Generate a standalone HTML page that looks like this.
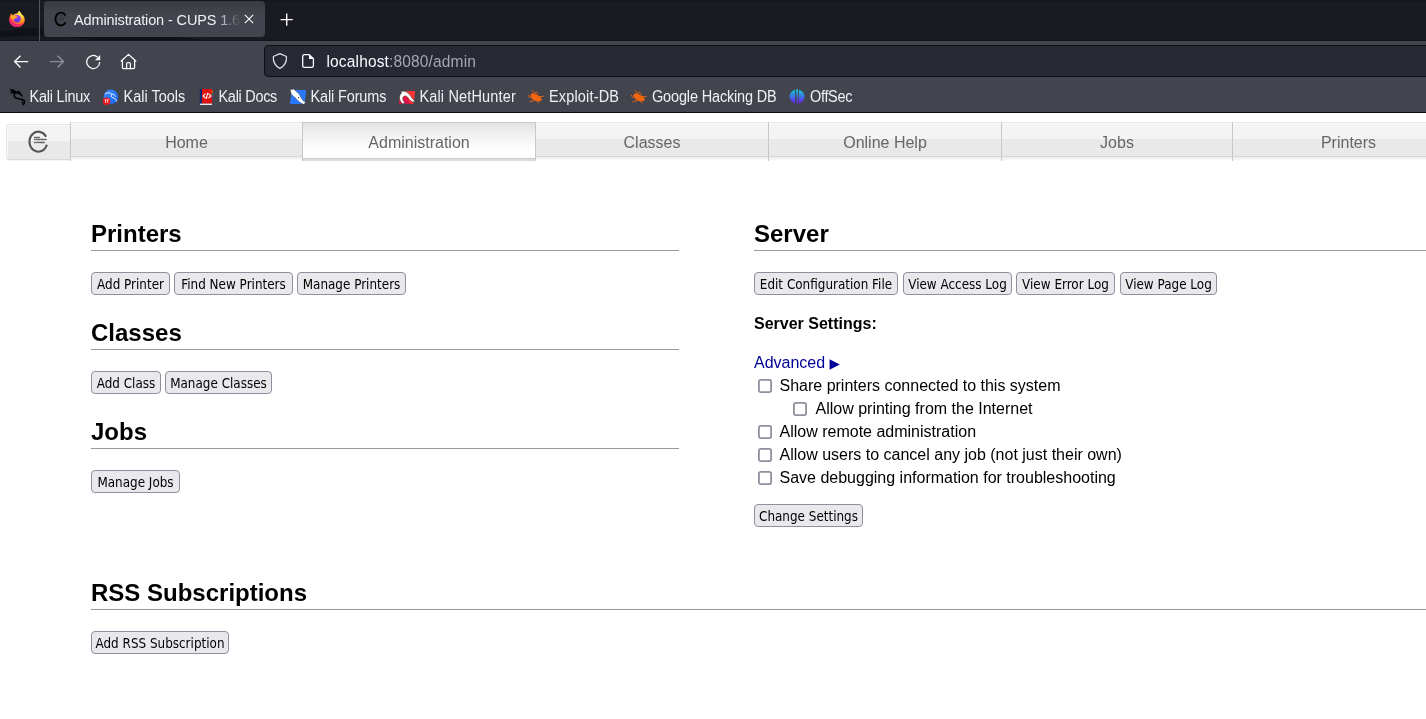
<!DOCTYPE html>
<html lang="en">
<head>
<meta charset="utf-8">
<title>Administration - CUPS 1.6</title>
<style>
html,body{margin:0;padding:0;}
body{width:1426px;height:719px;overflow:hidden;background:#fff;position:relative;font-family:"Liberation Sans",sans-serif;}
#chrome{position:absolute;left:0;top:0;width:1426px;height:113px;background:#43454e;overflow:hidden;}
#tabbar{position:absolute;left:0;top:0;width:1426px;height:41px;background:#191b21;}
#tabsep{position:absolute;left:39px;top:0;width:1px;height:41px;background:#56575d;}
#tab{position:absolute;left:44px;top:1px;width:221px;height:36px;background:linear-gradient(#3a3b41 0,#43454e 14px);border-radius:4px;}
#tabtitle{position:absolute;left:74px;top:10px;width:167px;height:20px;line-height:20px;font-size:14.5px;letter-spacing:-0.13px;color:#f0f0f4;white-space:nowrap;overflow:hidden;transform:scaleY(1.05);transform-origin:0 15px;-webkit-mask-image:linear-gradient(to right,#000 0,#000 140px,transparent 167px);mask-image:linear-gradient(to right,#000 0,#000 140px,transparent 167px);}
#navbar{position:absolute;left:0;top:41px;width:1426px;height:39px;background:#43454e;}
#urlbar{position:absolute;left:264px;top:45px;width:1170px;height:32px;background:#272935;border:1px solid #0f1014;border-radius:4px;box-sizing:border-box;}
#urltext{position:absolute;left:326.500px;top:52px;height:20px;line-height:20px;font-size:15.500px;letter-spacing:0.15px;color:#fbfbfe;white-space:nowrap;transform:scaleY(1.1);transform-origin:0 15px;}
#urltext span{color:#a6a7b0;}
#bmbar{position:absolute;left:0;top:80px;width:1426px;height:32px;}
.bm{position:absolute;top:87px;height:20px;line-height:20px;font-size:14.5px;color:#f0f0f4;white-space:nowrap;transform:scaleY(1.09);transform-origin:0 15px;}
#chromeline{position:absolute;left:0;top:112px;width:1426px;height:1px;background:#0c0c0d;}
#page{position:absolute;left:0;top:113px;width:1426px;height:606px;overflow:hidden;background:transparent;will-change:transform;}

/* page */
#nav{position:absolute;left:0;top:0;width:1426px;height:60px;}
#logo{position:absolute;left:6px;top:11px;width:64px;height:36px;box-sizing:border-box;border:1px solid #e6e6e6;border-right:none;border-bottom-color:#dadada;border-radius:3px 0 0 3px;background:linear-gradient(#f3f3f3 0,#f3f3f3 16px,#e9e9e9 16px,#e9e9e9 100%);box-shadow:inset 1px 1px 0 #f9f9f9,0 1px 0 #f6f6f6;}
.nc{position:absolute;top:9px;height:39px;box-sizing:border-box;border-left:1px solid #c8c8c8;background:linear-gradient(#e8e8e8 0,#e8e8e8 1px,#fafafa 1px,#fafafa 2px,#f4f4f4 2px,#f4f4f4 17px,#e9e9e9 17px,#e9e9e9 34px,#d6d6d6 34px,#d6d6d6 35px,#f0f0f0 35px,#f0f0f0 37px,#f7f7f7 37px,#f7f7f7 38px,#fdfdfd 38px,#fdfdfd 39px);color:#666;font-size:16px;text-align:center;line-height:41px;}
.nc.sel{background:linear-gradient(#c8c8c8 0,#c8c8c8 1px,#e2e2e2 1px,#f0f0f0 12px,#ffffff 28px,#ffffff 36px,#cccccc 36px,#cccccc 37px,#dddddd 37px,#dddddd 39px);border-right:1px solid #c8c8c8;}
h2{position:absolute;margin:0;font-size:24px;font-weight:bold;line-height:28px;color:#000;white-space:nowrap;}
.hr{position:absolute;height:1px;background:#999;}
.btn{position:absolute;box-sizing:border-box;height:23px;border:1px solid #8f8f9d;border-radius:4px;background:#e9e9ed;color:#000;font-family:"DejaVu Sans","Liberation Sans",sans-serif;font-size:12px;line-height:25px;text-align:center;white-space:nowrap;overflow:hidden;}
.btn span{display:inline-block;transform:scaleY(1.14);transform-origin:0 17px;}
.t{position:absolute;font-size:16px;line-height:20px;color:#000;white-space:nowrap;}
.tri{font-family:"DejaVu Sans",sans-serif;font-size:13.5px;position:relative;left:-0.2px;top:0.2px;}
.cb{position:absolute;width:14px;height:14px;}
.cb svg{display:block}
</style>
</head>
<body>
<div id="chrome">
  <div id="tabbar"><svg width="1426" height="41" viewBox="0 0 1426 41" style="position:absolute;left:0;top:0"><rect x="0" y="0" width="1426" height="1" fill="#15161b"/><path d="M0 31.500C20 28.500 40 26.500 70 26L215 41H95C70 36 40 34 0 37.500Z" fill="#111217"/><rect x="0" y="40" width="1426" height="1" fill="#121318"/></svg></div>
  <div id="tabsep"></div>
  <div id="tab"></div>
  <div id="tabtitle">Administration - CUPS 1.6</div>
  <div id="navbar"></div>
  <div id="urlbar"></div>
  <div id="urltext">localhost<span>:8080/admin</span></div>
  <div id="bmbar"></div>
  <div class="bm" style="left:29.5px;letter-spacing:-0.23px">Kali Linux</div>
  <div class="bm" style="left:123.5px;letter-spacing:0px">Kali Tools</div>
  <div class="bm" style="left:218.5px;letter-spacing:-0.3px">Kali Docs</div>
  <div class="bm" style="left:310.6px;letter-spacing:-0.15px">Kali Forums</div>
  <div class="bm" style="left:419.4px;letter-spacing:0.16px">Kali NetHunter</div>
  <div class="bm" style="left:549px;letter-spacing:0.16px">Exploit-DB</div>
  <div class="bm" style="left:652px;letter-spacing:-0.16px">Google Hacking DB</div>
  <div class="bm" style="left:810px;letter-spacing:-0.33px">OffSec</div>
  <div id="chromeline"></div>
<svg id="icons" width="1426" height="113" viewBox="0 0 1426 113" style="position:absolute;left:0;top:0;will-change:transform">
  <defs>
    <radialGradient id="ffg" cx="0.72" cy="0.12" r="0.95">
      <stop offset="0" stop-color="#fff45a"/><stop offset="0.3" stop-color="#ffd03a"/><stop offset="0.55" stop-color="#ff9a1f"/><stop offset="0.8" stop-color="#ff5a2a"/><stop offset="1" stop-color="#ff3050"/>
    </radialGradient>
    <linearGradient id="ffb" x1="1" y1="0" x2="0.2" y2="1"><stop offset="0" stop-color="#ff7a1f"/><stop offset="0.45" stop-color="#ff3b4e"/><stop offset="1" stop-color="#e8188a"/></linearGradient>
    <linearGradient id="ffp" x1="0.2" y1="0" x2="0.7" y2="1"><stop offset="0" stop-color="#c13ddc"/><stop offset="0.5" stop-color="#8a3cf0"/><stop offset="1" stop-color="#5a3df0"/></linearGradient>
    <linearGradient id="ofs" x1="0" y1="0" x2="0" y2="1"><stop offset="0" stop-color="#14c4d6"/><stop offset="0.5" stop-color="#3f74e0"/><stop offset="1" stop-color="#6a1cf2"/></linearGradient>
    <linearGradient id="kt" x1="0" y1="0" x2="1" y2="1"><stop offset="0" stop-color="#3d8bff"/><stop offset="1" stop-color="#1565f0"/></linearGradient>
  </defs>
  <!-- firefox logo -->
  <g>
    <path d="M19.200 10.700C20.300 11.900 21 13 21.500 13.900C23.800 15.200 25 17.600 24.700 20.200C24.300 24.100 21 27 17 27C12.600 27 9.300 23.600 9.300 19.500C9.300 17.400 10 15.300 11.400 13.300C11.800 14.200 12.400 14.800 13.300 15.200C14.500 13.900 16.300 13.500 17.500 13.600C17.600 12.500 18.200 11.500 19.200 10.700Z" fill="url(#ffg)"/>
    <circle cx="17.100" cy="18.700" r="3.700" fill="url(#ffp)"/>
    <path d="M10.300 16.900C11.800 15.400 14 15.300 15.100 16.100C16.400 16 17.500 16.600 18 17.600C16.700 17.300 15.700 17.700 15.100 18.500C14.300 19.600 12.400 19.700 11.400 18.800C10.800 18.300 10.400 17.600 10.300 16.900Z" fill="#ffae2b"/>
    <path d="M9.300 19.500C9.300 23.600 12.600 27 17 27C21 27 24.300 24.100 24.700 20.200C24 23 21.200 24.600 18 24.400C14.500 24.200 12.200 22 11.400 18.800C10.800 18.300 10.400 17.600 10.300 16.900C9.700 17.600 9.300 18.500 9.300 19.500Z" fill="url(#ffb)"/>
  </g>
  <!-- tab favicon (CUPS C) -->
  <path d="M65.400 15.400A5.500 6.400 0 1 0 65.600 22.300" fill="none" stroke="#000" stroke-width="1.900"/>
  <g fill="#222" font-family="Liberation Sans, sans-serif" font-weight="bold" font-size="2.300">
    <text x="58.400" y="16.400" textLength="3.600" lengthAdjust="spacingAndGlyphs">UNIX</text>
    <text x="57.600" y="18.200" textLength="8" lengthAdjust="spacingAndGlyphs">PRINTING</text>
    <text x="57.600" y="20" textLength="6.500" lengthAdjust="spacingAndGlyphs">SYSTEM</text>
  </g>
  <!-- tab close -->
  <path d="M244.800 14.800l8.400 8.400M253.200 14.800l-8.400 8.400" stroke="#fbfbfe" stroke-width="1.100" fill="none"/>
  <!-- new tab plus -->
  <path d="M280.600 19.600h12.200M286.700 13.500v12.200" stroke="#fbfbfe" stroke-width="1.400" fill="none"/>
  <!-- back -->
  <path d="M28.200 61.600H14.600M20.500 55.800l-5.900 5.800l5.900 5.800" stroke="#fbfbfe" stroke-width="1.400" fill="none" stroke-linejoin="round"/>
  <!-- forward -->
  <path d="M49.900 61.600h13.600M57.600 55.800l5.900 5.800l-5.900 5.800" stroke="#8d8e96" stroke-width="1.400" fill="none" stroke-linejoin="round"/>
  <!-- reload -->
  <path d="M97.600 57.200A6.500 6.500 0 1 0 99.700 62" stroke="#fbfbfe" stroke-width="1.250" fill="none"/>
  <path d="M100.200 54.900v5.300h-5.200z" fill="#fbfbfe"/>
  <!-- home -->
  <path d="M121.200 61L128.500 54.400l7.300 6.600M122.400 60v7.200q0 1.300 1.300 1.300h9.600q1.300 0 1.300-1.300V60M126.600 68.500v-4.600q0-1.200 1.200-1.200h1.400q1.200 0 1.200 1.200v4.600" stroke="#fbfbfe" stroke-width="1.250" fill="none" stroke-linejoin="round" stroke-linecap="round"/>
  <!-- shield -->
  <path d="M279.900 53.600l6.600 2.900c.3 5.500-2.400 9.800-6.600 11.900c-4.200-2.100-6.900-6.400-6.600-11.900z" stroke="#e4e4ea" stroke-width="1.200" fill="none" stroke-linejoin="round"/>
  <!-- page icon -->
  <path d="M304.300 54.700h5l4.100 4.100v7q0 1.600-1.600 1.600h-7.500q-1.600 0-1.600-1.600v-9.500q0-1.600 1.600-1.600z" stroke="#fbfbfe" stroke-width="1.300" fill="none" stroke-linejoin="round"/>
  <path d="M309 54.700v4.300h4.400z" fill="#fbfbfe"/>
  <!-- Kali Linux dragon -->
  <path d="M8.700 88.800L13.600 89.500L15.900 91.200L16.200 92.900L14.600 93.100L9.500 94.200L12.400 92.400L8.600 91.900L12.200 91Z" fill="#000"/>
  <path d="M15.400 91.700C17 91.200 18 91 18.800 91.100L19.800 91.600L23.300 96.800L21.700 96.200L18.600 93.900L16.300 93.400Z" fill="#000"/>
  <path d="M15.900 92.600C13.600 94 13.400 96.600 15.600 97.900C17.500 99 21.500 98.300 23.800 100.200C25 101.200 24.900 102.900 23.300 104.700" stroke="#000" stroke-width="1.500" fill="none" stroke-linecap="round"/>
  <path d="M21.600 99.600C22.400 101 22.500 102.500 22.800 103.900" stroke="#000" stroke-width="1.100" fill="none" stroke-linecap="round"/>
  <!-- Kali Tools -->
  <circle cx="110.900" cy="96.800" r="7.300" fill="url(#kt)"/>
  <path d="M105.500 93.600c2.500-1.200 5-1 6.300.4c1.700.1 3 .9 3.900 2.400M111.600 94.400c-.9 1.200-.5 2.600 1 3.200c1.700.7 3.500 1.200 4 3.500" stroke="#e8f1ff" stroke-width="1" fill="none" stroke-linecap="round"/>
  <circle cx="106.600" cy="101.200" r="3.800" fill="#e8141c"/>
  <path d="M104.700 99.800h1.800M105.600 99.800v3M106.900 99.800h1.800M107.800 99.800v3" stroke="#fff" stroke-width=".8" fill="none"/>
  <!-- Kali Docs -->
  <rect x="199.800" y="89" width="2.200" height="15.800" fill="#0c2a6e"/>
  <rect x="202" y="89" width="10.100" height="14.600" fill="#e0120f"/>
  <rect x="200" y="103.600" width="12.100" height="1.400" fill="#e9e9ee"/>
  <rect x="211.600" y="90.300" width="1.100" height="2.300" fill="#f26a0c"/><rect x="211.600" y="93" width="1.100" height="2.300" fill="#2f8a4a"/><rect x="211.600" y="95.700" width="1.100" height="2.300" fill="#6a3fb5"/>
  <path d="M205.500 93.700l-2.400 2.200l2.400 2.200M208.500 93.700l2.400 2.200l-2.400 2.200M207.800 92.900l-1.600 6" stroke="#fff" stroke-width="1.100" fill="none"/>
  <!-- Kali Forums -->
  <path d="M293 90h12.200q1 0 .9 1l-1.400 12q-.1 1-1.100 1H291q-1 0-.9-1l1.400-12q.1-1 1.100-1z" fill="#2777ff"/>
  <path d="M290 89.200l2.200.4l1.300-.7l4.300 3.800c1.500 1.400 2.400 3 3.100 4.900l2 3l2.100 1l.4 1.500l-2 1.200l-2.500-1.400c-2.400-1.500-4.100-3.100-5.500-5.100c-1.800-1-3.100-2.300-4.200-4.100z" fill="#fff" stroke="#222" stroke-width=".4"/>
  <circle cx="298.600" cy="97.600" r=".7" fill="#222"/>
  <!-- Kali NetHunter -->
  <path d="M404.500 90.900h9.700q1 0 .9 1l-1.400 11q-.1 1-1.100 1H400q-1 0-.9-1l.6-5z" fill="#ff3434"/>
  <path d="M399.200 98.500l13 5.400h-12.200q-1 0-.9-1z" fill="#d4134b"/>
  <path d="M399.400 90l1.700 1.200c3.600-.5 6.800 1 9.100 4.100c1.100 1.800 2.300 3.900 4.400 5.700l-.4 1.300c-2.400-.4-4.400-1.900-5.700-4c-1.300-1.900-2.800-2.800-4.500-2.100c-1.600.8-1.700 3.200-.2 5.400l1.300 1.800l-2.600.3c-2.600-2.200-3.600-5.200-2.800-7.900c.4-1.300 1.100-2.400 2-3.300z" fill="#fff" stroke="#1a1a1a" stroke-width=".5"/>
  <path d="M404 96.800c1.600-.6 2.900.3 3.900 1.900l1.600 3.200l-3.400 1.500l-2.100-2.500c-.9-1.600-.9-3.200 0-4.100z" fill="#e0134a"/>
  <!-- Exploit-DB bug -->
  <g id="bug" fill="#f4650f">
    <path d="M530.700 94.300c1.300-1.200 3.300-1.300 5.200-.4c2.300 1.100 4.200 2.600 5.400 4.400c.9 1.400.2 2.800-1.200 2.900c-2.400.3-5-.3-7.200-1.800c-2.200-1.500-3.300-3.600-2.200-5.100z"/>
    <path d="M532 90.600l2.500 2.200l1.800-.6l2.100 1.700M528.200 95.100l1.500 2.600M538.500 96.800l4.800-.5M530 101.600l4-.8M537 101.200l1.800 1.800" stroke="#f4650f" stroke-width=".9" fill="none" stroke-linecap="round"/>
  </g>
  <use href="#bug" x="103"/>
  <!-- OffSec -->
  <path d="M795.200 89.800v13.600c-3.300-.8-5.700-3.600-5.700-6.800s2.400-6 5.700-6.800z" fill="url(#ofs)"/>
  <path d="M798.900 89.800v13.600c3.300-.8 5.700-3.600 5.700-6.800s-2.400-6-5.700-6.800z" fill="url(#ofs)"/>
  <path d="M796.100 89.300h1.900v13.200l-.95 2z" fill="url(#ofs)"/>
</svg>

</div>
<div id="page">
<div id="nav">
  <div id="logo"><svg width="64" height="36" viewBox="0 0 64 36" style="position:absolute;left:-1px;top:-1px"><path d="M40.11 12.70A8.9 10.0 0 1 0 40.86 20.79" fill="none" stroke="#555" stroke-width="2.200"/><g fill="#555" stroke="#555" stroke-width="0.35" font-family="Liberation Sans, sans-serif" font-weight="bold" font-size="2.500"><text x="28.100" y="14.100" textLength="5.800" lengthAdjust="spacingAndGlyphs">UNIX</text><text x="28.100" y="16.100" textLength="12.600" lengthAdjust="spacingAndGlyphs">PRINTING</text><text x="28.100" y="19.300" textLength="10.400" lengthAdjust="spacingAndGlyphs">SYSTEM</text></g></svg></div>
  <div class="nc" style="left:70px;width:232px">Home</div>
  <div class="nc" style="left:535px;width:233px">Classes</div>
  <div class="nc" style="left:768px;width:233px">Online Help</div>
  <div class="nc" style="left:1001px;width:231px">Jobs</div>
  <div class="nc" style="left:1232px;width:232px">Printers</div>
  <div class="nc sel" style="left:302px;width:234px">Administration</div>
</div>
<h2 style="left:91px;top:107px">Printers</h2>
<div class="hr" style="left:91px;top:137px;width:588px"></div>
<div class="btn" style="left:91px;top:159px;width:79px"><span>Add Printer</span></div>
<div class="btn" style="left:174px;top:159px;width:119px"><span>Find New Printers</span></div>
<div class="btn" style="left:297px;top:159px;width:109px"><span>Manage Printers</span></div>
<h2 style="left:91px;top:206px">Classes</h2>
<div class="hr" style="left:91px;top:236px;width:588px"></div>
<div class="btn" style="left:91px;top:258px;width:70px"><span>Add Class</span></div>
<div class="btn" style="left:165px;top:258px;width:107px"><span>Manage Classes</span></div>
<h2 style="left:91px;top:305px">Jobs</h2>
<div class="hr" style="left:91px;top:335px;width:588px"></div>
<div class="btn" style="left:91px;top:357px;width:89px"><span>Manage Jobs</span></div>
<h2 style="left:754px;top:107px">Server</h2>
<div class="hr" style="left:754px;top:137px;width:700px"></div>
<div class="btn" style="left:754px;top:159px;width:144px"><span>Edit Configuration File</span></div>
<div class="btn" style="left:903px;top:159px;width:109px"><span>View Access Log</span></div>
<div class="btn" style="left:1016px;top:159px;width:99px"><span>View Error Log</span></div>
<div class="btn" style="left:1120px;top:159px;width:97px"><span>View Page Log</span></div>
<div class="t" style="left:754px;top:201px;font-weight:bold">Server Settings:</div>
<div class="t" style="left:754px;top:240px;color:#000099">Advanced <span class="tri">&#9654;</span></div>
<div class="cb" style="left:758px;top:266px"><svg width="14" height="14" viewBox="0 0 14 14"><rect x="0.900" y="0.900" width="12.200" height="12.200" rx="1.800" fill="#fff" stroke="#8f8f9d" stroke-width="1.800"/></svg></div>
<div class="t" style="left:779.5px;top:263px">Share printers connected to this system</div>
<div class="cb" style="left:793px;top:289px"><svg width="14" height="14" viewBox="0 0 14 14"><rect x="0.900" y="0.900" width="12.200" height="12.200" rx="1.800" fill="#fff" stroke="#8f8f9d" stroke-width="1.800"/></svg></div>
<div class="t" style="left:815.5px;top:286px">Allow printing from the Internet</div>
<div class="cb" style="left:758px;top:312px"><svg width="14" height="14" viewBox="0 0 14 14"><rect x="0.900" y="0.900" width="12.200" height="12.200" rx="1.800" fill="#fff" stroke="#8f8f9d" stroke-width="1.800"/></svg></div>
<div class="t" style="left:779.5px;top:309px">Allow remote administration</div>
<div class="cb" style="left:758px;top:335px"><svg width="14" height="14" viewBox="0 0 14 14"><rect x="0.900" y="0.900" width="12.200" height="12.200" rx="1.800" fill="#fff" stroke="#8f8f9d" stroke-width="1.800"/></svg></div>
<div class="t" style="left:779.5px;top:332px">Allow users to cancel any job (not just their own)</div>
<div class="cb" style="left:758px;top:358px"><svg width="14" height="14" viewBox="0 0 14 14"><rect x="0.900" y="0.900" width="12.200" height="12.200" rx="1.800" fill="#fff" stroke="#8f8f9d" stroke-width="1.800"/></svg></div>
<div class="t" style="left:779.5px;top:355px">Save debugging information for troubleshooting</div>
<div class="btn" style="left:754px;top:391px;width:109px"><span>Change Settings</span></div>
<h2 style="left:91px;top:466px">RSS Subscriptions</h2>
<div class="hr" style="left:91px;top:496px;width:1400px"></div>
<div class="btn" style="left:91px;top:518px;width:138px"><span>Add RSS Subscription</span></div>
</div>
</body>
</html>
